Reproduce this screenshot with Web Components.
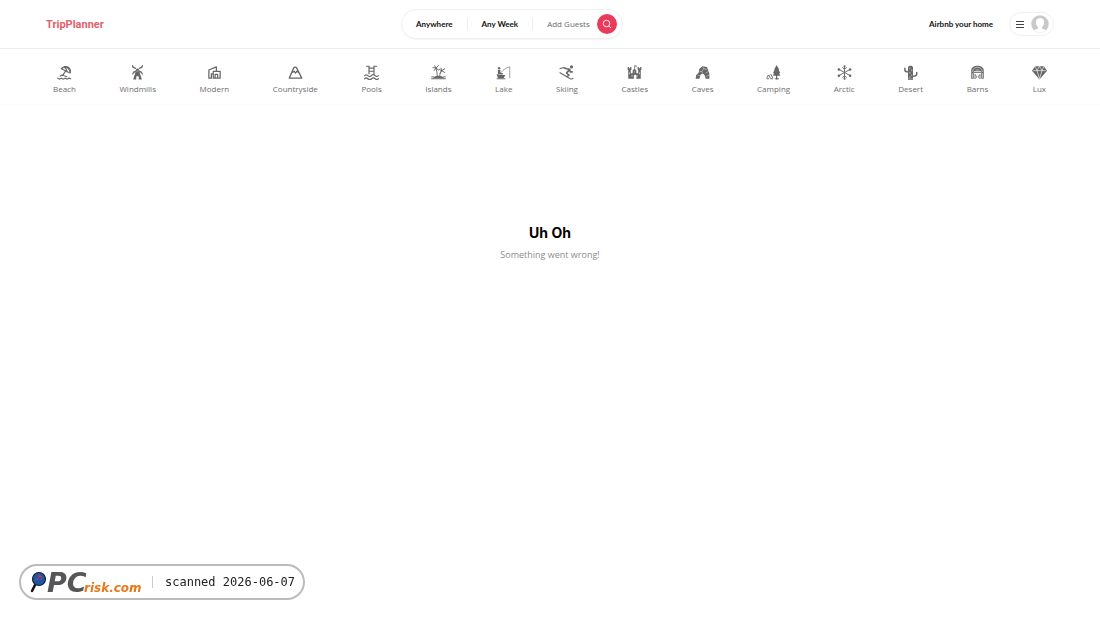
<!DOCTYPE html>
<html lang="en">
<head>
<meta charset="utf-8">
<meta name="viewport" content="width=device-width, initial-scale=1">
<title>TripPlanner</title>
<style>
  body {
    margin: 0;
    background: #fff;
    color: #111;
    font-family: "Open Sans", "Noto Sans", sans-serif;
    font-size: 8px;
    line-height: 12px;
  }
</style>
</head>
<body>
<trip-navbar>
  <trip-logo slot="logo">TripPlanner</trip-logo>
  <trip-search slot="search"></trip-search>
  <trip-user-menu slot="user">Airbnb your home</trip-user-menu>
</trip-navbar>
<trip-categories></trip-categories>
<trip-empty-state>
  <span slot="title">Uh Oh</span>
  <span slot="subtitle">Something went wrong!</span>
</trip-empty-state>
<scan-badge>scanned 2026-06-07</scan-badge>

<script>
const icons = {
  beach: `<g fill="none" stroke="currentColor" stroke-width="1.7" stroke-linecap="round" stroke-linejoin="round">
    <path d="M7 6c3-5 11-5 14 1 1 2 1 4 0 6L7 6z"/><path d="M7 6c4-3 8-3 9 5M12 3c5 0 8 4 9 9M14 9l-5 8"/>
    <path d="M5 18c2-3 4-2 6-1s3 1 5 2M1 21c2 2 4 2 6 0 2 2 4 2 6 0 2 2 4 2 6 0l3 1"/></g>`,
  windmills: `<path d="M9 10h6l1 4 3 9h-5v-5h-4v5H5l3-9zM8 9l4-4 4 4z"/>
    <path d="M4 2l16 12M20 2L4 14" fill="none" stroke="currentColor" stroke-width="1.300"/>
    <path d="M4 0l1 4 4 1M20 0l-1 4-4 1M4 15l2-4 3-1M20 15l-2-4-3-1" fill="none" stroke="currentColor" stroke-width="1.700"/>`,
  modern: `<path d="M8 21H3V8l12-5v7M10 21V10h11v11zM13 21v-6h4v6M7 21v-7h3" fill="none" stroke="currentColor" stroke-width="2" stroke-linejoin="round"/>`,
  countryside: `<path d="M2 21L9 5c1-2 4-2 5 0l8 16zM7 12l3-2 2 3 2-3 3 2" fill="none" stroke="currentColor" stroke-width="2" stroke-linejoin="round"/>`,
  pools: `<g fill="none" stroke="currentColor" stroke-width="1.900" stroke-linecap="round">
    <path d="M4 2h4v12M20 2h-4v12M8 5h8M8 10h8"/>
    <path d="M1 17c2-2 3-2 5 0s4 2 6 0 4-2 6 0 3 2 5 0M1 22c2-2 3-2 5 0s4 2 6 0 4-2 6 0 3 2 5 0"/></g>`,
  islands: `<g fill="none" stroke="currentColor" stroke-width="1.500" stroke-linecap="round">
    <path d="M8 5c1 4 2 8 2 12M17 9c-2 2-3 5-3 8M8 5L3 4M8 5L5 9M8 5l4 3M8 5l4-4M8 5L6 1M17 9l-4-2M17 9l-2 4M17 9l5 3M17 9l5-3M17 9l-1-4M1 22h22M1 19h3M20 19h3"/></g>
    <path d="M3 21c4-5 14-5 18 0z"/>`,
  lake: `<path d="M8 12C12 7 17 4 22 3v18" fill="none" stroke="currentColor" stroke-width="1"/>
    <circle cx="5" cy="5" r="2"/><path d="M3 8h4v4l4 1v2H3zM1 14l3 2h11l-3 5H3z"/>
    <path d="M1 22h14" stroke="currentColor" stroke-width="1.500"/>`,
  skiing: `<circle cx="20" cy="3" r="2.500"/>
    <path d="M7 4l5 2 5 1-5 6 4 3-4 3M17 7l1 4h4" fill="none" stroke="currentColor" stroke-width="2.500" stroke-linejoin="round"/>
    <path d="M1 12l17 10c2 1 4 0 5-1M1 6l6-2" fill="none" stroke="currentColor" stroke-width="1.700"/>`,
  castles: `<path d="M1 3h2v2h2V3h2v5H6v5h3V9l3-4 3 4v4h3V8h-1V3h2v2h2V3h2v5h-1v14h-7v-4c0-3-4-3-4 0v4H2V8H1z"/>
    <path d="M12 6V1h3v2h-3" fill="none" stroke="currentColor" stroke-width="1"/>
    <path d="M4 12v3M20 12v3M8 16v3M16 16v3M11 11h2" stroke="#fff" stroke-width="1"/>`,
  caves: `<path d="M1 22l1-6 4-4 1-6 5-4 7 1 2 5 2 6v8h-6l-1-5-3-3-4 1-2 7z"/>
    <path d="M4 16l4 1M7 11l4-1 3-4 5 1M12 3l2 3M17 13l5-3M11 10l1 4M18 18l5-2" fill="none" stroke="#fff" stroke-width=".7"/>`,
  camping: `<path d="M17 0l4 7h-1l3 6h-2l2 4h-5v6h-2v-6h-5l2-4h-2l3-6h-1z"/>
    <path d="M1 21l3-5 3 5M6 17l2-2 3 6M1 22h4M7 22h4M14 22h7" fill="none" stroke="currentColor" stroke-width="1.500"/>`,
  arctic: `<path d="M12 2v20M3 7l18 10M21 7L3 17M9 4l3 3 3-3M9 20l3-3 3 3" fill="none" stroke="currentColor" stroke-width="1.500" stroke-linecap="round"/>
    <circle cx="12" cy="2" r="1.700"/><circle cx="12" cy="22" r="1.700"/><circle cx="3" cy="7" r="2"/><circle cx="21" cy="7" r="2"/><circle cx="3" cy="17" r="2"/><circle cx="21" cy="17" r="2"/>`,
  desert: `<path d="M8 22V4c0-4 8-4 8 0v18z"/>
    <path d="M3 5v3c0 2 2 3 5 3M22 12v2c0 3-2 4-6 4" fill="none" stroke="currentColor" stroke-width="2.300" stroke-linecap="round"/>
    <path d="M11 4v3M14 7v3M11 11v3M14 15v3M11 18v3" stroke="#fff" stroke-width=".8"/><path d="M8 23h8" stroke="currentColor" stroke-width="1.500"/>`,
  barns: `<path d="M2 22V8c1-9 19-9 20 0v14h-4V10H6v12z"/>
    <path d="M4 11c1-10 15-10 16 0M4 13v8M20 13v8M9 8h6" fill="none" stroke="#fff" stroke-width=".9"/>
    <path d="M6 12h12M8 22v-7l3 4-3 3M16 22v-7l-3 4 3 3" fill="none" stroke="currentColor" stroke-width="1.300"/>`,
  lux: `<path d="M5 2h14l5 7-12 14L0 9z"/>
    <path d="M2 9h20M5 2l3 7 4 13 4-13 3-7M8 9l4-7 4 7" fill="none" stroke="#fff" stroke-width="1"/>`
};

class TripNavbar extends HTMLElement {
  constructor() {
    super();
    this.attachShadow({ mode: 'open' }).innerHTML = `
      <style>
      :host { display: block; border-bottom: 1px solid #ececec; }
      header {
        display: flex;
        align-items: center;
        justify-content: space-between;
        min-height: 48px;
        padding: 0 46px;
      }
      </style>
      <header>
        <slot name="logo"></slot>
        <slot name="search"></slot>
        <slot name="user"></slot>
      </header>`;
  }
}
customElements.define('trip-navbar', TripNavbar);

class TripLogo extends HTMLElement {
  constructor() {
    super();
    this.attachShadow({ mode: 'open' }).innerHTML = `
      <style>
      :host { display: block; padding-top: 2px; }
      a {
        display: block;
        color: #e0616a;
        font: 700 11px/16px Roboto, sans-serif;
        text-decoration: none;
      }
      </style>
      <a href="#"><slot></slot></a>`;
  }
}
customElements.define('trip-logo', TripLogo);

class TripSearch extends HTMLElement {
  constructor() {
    super();
    this.attachShadow({ mode: 'open' }).innerHTML = `
      <style>
      :host { display: block; }
      .search {
        display: flex;
        align-items: center;
        height: 28px;
        border: 1px solid #efefef;
        border-radius: 15px;
        box-shadow: 0 1px 1px rgba(0,0,0,.04);
      }
      button {
        font: inherit;
        color: inherit;
        background: none;
        border: 0;
        margin: 0;
        padding: 0 14px;
        cursor: pointer;
      }
      .where, .week { font-family: Lato, sans-serif; font-weight: 700; }
      .week {
        border: solid #efefef;
        border-width: 0 1px;
      }
      .guests {
        display: flex;
        align-items: center;
        gap: 7px;
        padding-right: 5px;
        color: #6b6b6b;
      }
      .go {
        display: grid;
        place-items: center;
        width: 20px;
        height: 20px;
        border-radius: 50%;
        background: #e93b5b;
        color: #fff;
      }
      </style>
      <div class="search">
        <button type="button" class="where">Anywhere</button>
        <button type="button" class="week">Any Week</button>
        <button type="button" class="guests">
          <span>Add Guests</span>
          <span class="go">
            <svg width="10" height="10" viewBox="0 0 20 20" fill="none" stroke="currentColor" stroke-width="1.800"><circle cx="9" cy="9" r="6.500"/><path d="M14 14l4 4"/></svg>
          </span>
        </button>
      </div>`;
  }
}
customElements.define('trip-search', TripSearch);

class TripUserMenu extends HTMLElement {
  constructor() {
    super();
    this.attachShadow({ mode: 'open' }).innerHTML = `
      <style>
      :host { display: flex; align-items: center; gap: 7px; }
      button {
        font: inherit;
        color: inherit;
        background: none;
        border: 0;
        cursor: pointer;
      }
      .home { font-family: Lato, sans-serif; font-weight: 700; padding: 7px 9px; }
      .menu {
        display: flex;
        align-items: center;
        gap: 7px;
        padding: 2px 4px 2px 5px;
        border: 1px solid #f0f0f0;
        border-radius: 12px;
      }
      </style>
      <button type="button" class="home"><slot></slot></button>
      <button type="button" class="menu" aria-label="Menu">
        <svg width="9" height="9" viewBox="0 0 9 9" stroke="#444" stroke-width="1"><path d="M1 1.500h8M1 4.500h8M1 7.500h8"/></svg>
        <svg width="18" height="18" viewBox="0 0 36 36">
          <defs><clipPath id="round"><circle cx="18" cy="18" r="17.500"/></clipPath></defs>
          <g clip-path="url(#round)">
            <path fill="#c9c9c9" d="M0 0h36v36H0z"/>
            <path fill="#fff" d="M18 6c6 0 8 4 8 9 0 4-2 7-4 9v3c3 1 8 2 9 6v3H5v-3c1-4 6-5 9-6v-3c-2-2-4-5-4-9 0-5 2-9 8-9z"/>
          </g>
        </svg>
      </button>`;
  }
}
customElements.define('trip-user-menu', TripUserMenu);

class CategoryBox extends HTMLElement {
  constructor() {
    super();
    this.attachShadow({ mode: 'open' });
  }

  connectedCallback() {
    this.shadowRoot.innerHTML = `
      <style>
      :host { display: block; }
      a {
        display: flex;
        flex-direction: column;
        align-items: center;
        gap: 3px;
        padding: 7px;
        color: #6d6d6d;
        text-decoration: none;
      }
      svg { display: block; fill: #666; color: #666; }
      </style>
      <a href="#">
        <svg width="15" height="15" viewBox="0 0 24 24" aria-hidden="true">${icons[this.getAttribute('icon')]}</svg>
        <slot></slot>
      </a>`;
  }
}
customElements.define('category-box', CategoryBox);

class TripCategories extends HTMLElement {
  constructor() {
    super();
    const items = Object.keys(icons).map(name =>
      `<category-box icon="${name}">${name[0].toUpperCase() + name.slice(1)}</category-box>`);
    this.attachShadow({ mode: 'open' }).innerHTML = `
      <style>
      :host { display: block; }
      nav {
        display: flex;
        align-items: center;
        justify-content: space-between;
        padding: 9px 46px 2px;
        border-bottom: 1px solid #fcfcfc;
      }
      </style>
      <nav>${items.join('')}</nav>`;
  }
}
customElements.define('trip-categories', TripCategories);

class TripEmptyState extends HTMLElement {
  constructor() {
    super();
    this.attachShadow({ mode: 'open' }).innerHTML = `
      <style>
      :host {
        display: flex;
        flex-direction: column;
        align-items: center;
        gap: 5px;
        padding-top: 118px;
        text-align: center;
      }
      h1 { margin: 0; color: #000; font: 700 14px/20px Inter, sans-serif; }
      p { margin: 0; font-size: 9px; line-height: 14px; color: #8c8c8c; }
      </style>
      <h1><slot name="title"></slot></h1>
      <p><slot name="subtitle"></slot></p>`;
  }
}
customElements.define('trip-empty-state', TripEmptyState);

class ScanBadge extends HTMLElement {
  constructor() {
    super();
    this.attachShadow({ mode: 'open' }).innerHTML = `
      <style>
      :host {
        position: fixed;
        left: 19px;
        bottom: 19px;
        display: flex;
        align-items: center;
        box-sizing: border-box;
        height: 36px;
        padding: 0 8px 0 10px;
        border: 2px solid #bbb;
        border-radius: 18px;
        background: #fff;
        color: #222;
        font: 12px/16px "DejaVu Sans Mono", monospace;
      }
      svg { display: block; overflow: visible; }
      .scan { margin-left: 10px; padding-left: 12px; border-left: 1px solid #ccc; line-height: 12px; }
      text { font-family: "DejaVu Sans", sans-serif; font-weight: 700; font-style: italic; }
      </style>
      <svg width="111" height="32" viewBox="0 0 111 32">
        <path d="M4 19L1 25" stroke="#111" stroke-width="2.500" stroke-linecap="round"/>
        <circle cx="8" cy="13" r="6.500" fill="#1b56a5" stroke="#123" stroke-width="1.200"/>
        <path d="M4 14l3-1 2-3 2 1-1 3M8 8v3" fill="none" stroke="#c5375b" stroke-width="1"/>
        <text x="16" y="26" font-size="27" fill="#565557">PC</text>
        <text x="53" y="26" font-size="12" fill="#e8781a">risk.com</text>
      </svg>
      <span class="scan"><slot></slot></span>`;
  }
}
customElements.define('scan-badge', ScanBadge);
</script>
</body>
</html>
